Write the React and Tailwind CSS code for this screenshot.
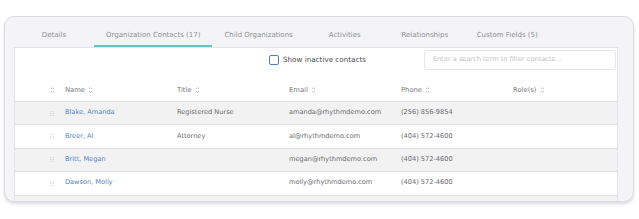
import React from "react";

const SortIcon = () => (
  <svg width="5" height="8" viewBox="0 0 5 8" className="inline-block ml-[3px]">
    <path d="M1 3 L2.5 1.5 L4 3" fill="none" stroke="#b8b8b8" strokeWidth="0.8" />
    <path d="M1 5 L2.5 6.5 L4 5" fill="none" stroke="#b8b8b8" strokeWidth="0.8" />
  </svg>
);

const Handle = () => (
  <svg width="4" height="5" viewBox="0 0 4 5">
    {[0.7, 2.5, 4.3].map((y) =>
      [0.8, 3.2].map((x) => <circle key={`${x}-${y}`} cx={x} cy={y} r="0.6" fill="#cdcdcd" />)
    )}
  </svg>
);

const tabs = [
  { label: "Details" },
  { label: "Organization Contacts (17)", active: true },
  { label: "Child Organizations" },
  { label: "Activities" },
  { label: "Relationships" },
  { label: "Custom Fields (5)" },
];

const rows = [
  { name: "Blake, Amanda", title: "Registered Nurse", email: "amanda@rhythmdemo.com", phone: "(256) 856-9854" },
  { name: "Breer, Al", title: "Attorney", email: "al@rhythmdemo.com", phone: "(404) 572-4600" },
  { name: "Britt, Megan", title: "", email: "megan@rhythmdemo.com", phone: "(404) 572-4600" },
  { name: "Dawson, Molly", title: "", email: "molly@rhythmdemo.com", phone: "(404) 572-4600" },
  { name: "", title: "", email: "", phone: "" },
];

export default function App() {
  return (
    <div className="w-[639px] h-[219px] bg-white overflow-hidden font-['DejaVu_Sans',sans-serif] text-[7px]">
      <div className="ml-[4px] mt-[16px] w-[630px] h-[186px] rounded-[10px] border border-[#dcdce3] bg-[#f4f4f6] shadow-[0_2px_3px_rgba(90,90,130,0.22)] overflow-hidden pl-[9px] pr-[15px] pt-[8px]">
        <div className="flex h-[22px]">
          {tabs.map((t) => (
            <div
              key={t.label}
              className={
                t.active
                  ? "min-w-[80px] px-[12px] flex items-center justify-center text-[#8e8e94] border-b-2 border-[#5ec7bd] whitespace-nowrap"
                  : "min-w-[80px] px-[12px] flex items-center justify-center text-[#8e8e94] border-b-2 border-transparent whitespace-nowrap"
              }
            >
              {t.label}
            </div>
          ))}
        </div>
        <div className="bg-white border border-[#e4e4e8] h-[200px]">
          <div className="flex items-center justify-end h-[20px] mt-[2px] pr-[1px]">
            <div className="flex items-center mr-[58px]">
              <div className="w-[10px] h-[10px] rounded-[2px] border-[1.5px] border-[#4d7fc4] bg-white" />
              <span className="ml-[4px] text-[#4a4a4e] text-[7.2px]">Show inactive contacts</span>
            </div>
            <div className="w-[192px] h-[20px] border border-[#e6e6ea] rounded-[3px] flex items-center pl-[8px] text-[#c0c0c4] text-[6.6px]">
              Enter a search term to filter contacts...
            </div>
          </div>
          <div className="mt-[9px] h-[23px] flex items-center border-b border-[#e2e2e2] text-[#77777c] text-[6.8px]">
            <div className="w-[50px] pl-[32px] flex items-center"><SortIcon /></div>
            <div className="w-[112px] flex items-center">Name<SortIcon /></div>
            <div className="w-[112px] flex items-center">Title<SortIcon /></div>
            <div className="w-[112px] flex items-center">Email<SortIcon /></div>
            <div className="w-[112px] flex items-center">Phone<SortIcon /></div>
            <div className="flex items-center">Role(s)<SortIcon /></div>
          </div>
          {rows.map((r, i) => (
            <div
              key={i}
              className={
                (i % 2 === 0 ? "bg-[#f2f2f3] " : "bg-white ") +
                "h-[23.4px] flex items-center border-b-[1.5px] border-[#e0e0e3] text-[#6a6a6e] text-[6.6px]"
              }
            >
              <div className="w-[50px] pl-[35px] flex items-center">{r.name && <Handle />}</div>
              <div className="w-[112px] text-[#4f82c4]">{r.name}</div>
              <div className="w-[112px]">{r.title}</div>
              <div className="w-[112px]">{r.email}</div>
              <div className="w-[112px]">{r.phone}</div>
              <div></div>
            </div>
          ))}
        </div>
      </div>
    </div>
  );
}
